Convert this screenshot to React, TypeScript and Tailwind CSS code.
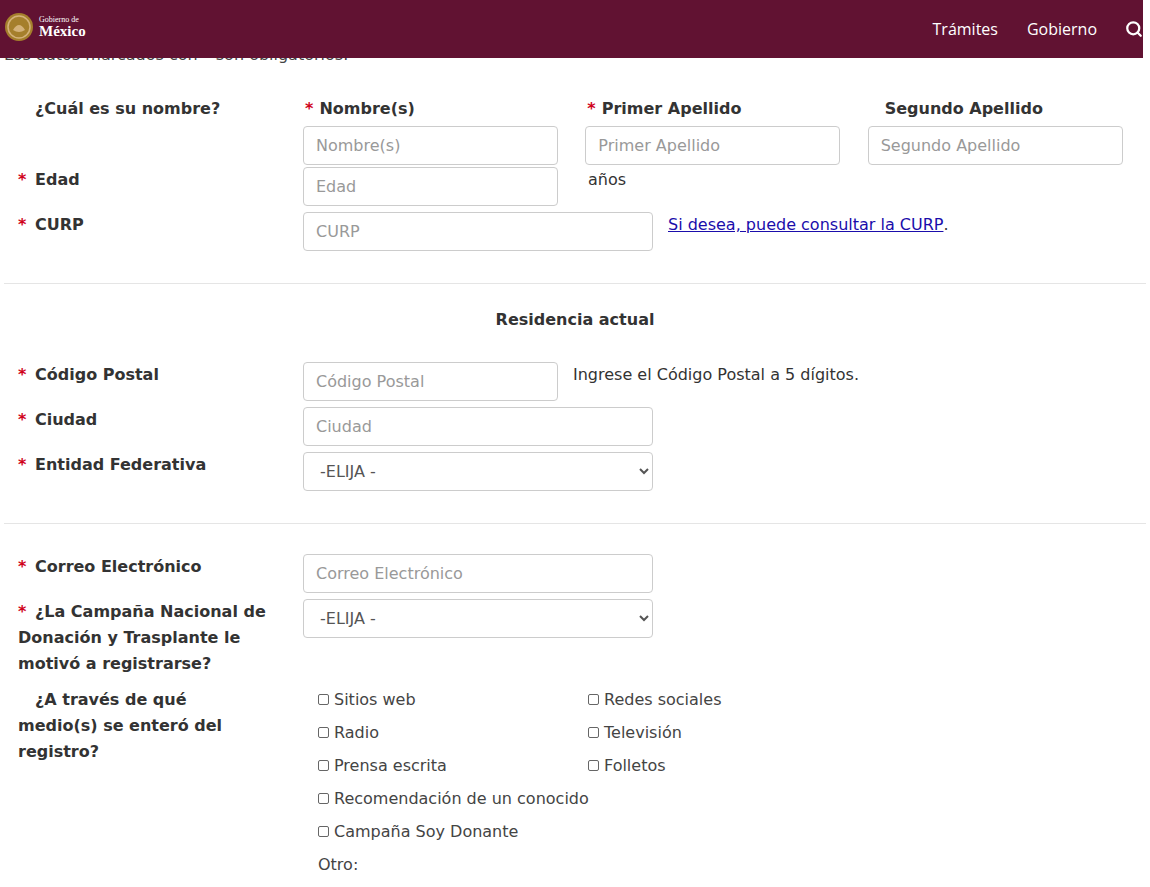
import { Search } from 'lucide-react';

const font = { fontFamily: '"DejaVu Sans", "Liberation Sans", sans-serif' };

function Req({ on = true }: { on?: boolean }) {
  return <span className="inline-block w-[17px] text-[#d0021b]">{on ? '*' : ''}</span>;
}

function Input({ ph, w = 'w-[255px]' }: { ph: string; w?: string }) {
  return (
    <input
      placeholder={ph}
      className={`${w} h-[39px] rounded-[4px] border border-[#cccccc] px-3 text-[16px] text-[#555] placeholder:text-[#999] outline-none`}
    />
  );
}

function Select({ w = 'w-[350px]' }: { w?: string }) {
  return (
    <select className={`${w} h-[39px] rounded-[4px] border border-[#cccccc] px-3 text-[16px] text-[#555] bg-white`}>
      <option>-ELIJA -</option>
    </select>
  );
}

function Row({ label, children, h = 'h-[45px]' }: { label: React.ReactNode; children: React.ReactNode; h?: string }) {
  return (
    <div className={`flex ${h}`}>
      <div className="w-[303px] shrink-0 pl-[18px] pr-[30px] pt-[0px] font-bold text-[#333]">{label}</div>
      <div className="flex items-start">{children}</div>
    </div>
  );
}

function Check({ t }: { t: string }) {
  return (
    <label className="flex items-center gap-[5px] h-[33px] text-[#444]">
      <span className="inline-block w-[11px] h-[11px] border border-[#666] rounded-[2px]" />
      {t}
    </label>
  );
}

export default function App() {
  return (
    <div className="relative bg-white min-h-[887px] text-[16px] text-[#333] overflow-hidden" style={font}>
      <header className="absolute top-0 left-0 w-[1143px] h-[58px] bg-[#611232] flex items-center justify-between pl-[4px] pr-[0px] z-10" style={{ fontFamily: '"Open Sans", sans-serif' }}>
        <div className="flex items-center gap-[5px] -mt-[4px]">
          <svg width="30" height="30" viewBox="0 0 30 30">
            <circle cx="15" cy="15" r="14" fill="#a57f2c" />
            <circle cx="15" cy="15" r="11" fill="none" stroke="#d4b27a" strokeWidth="1.5" />
            <path d="M9 18 Q15 8 21 18 Q15 22 9 18Z" fill="#d4b27a" />
          </svg>
          <div className="leading-none text-white" style={{ fontFamily: '"Liberation Serif", serif' }}>
            <div className="text-[8px]">Gobierno de</div>
            <div className="text-[15px] font-bold">México</div>
          </div>
        </div>
        <nav className="flex items-center text-white text-[16px]">
          <span className="mr-[29px]">Trámites</span>
          <span className="mr-[28px]">Gobierno</span>
          <Search size={18} strokeWidth={3} />
        </nav>
      </header>
      <div className="pt-[42px] pl-[4px] text-[#444] leading-[26px]">Los datos marcados con * son obligatorios.</div>

      <div className="pt-[28px] leading-[26px]">
        <div className="flex">
          <div className="w-[303px] shrink-0 pl-[18px] font-bold"><Req on={false} />¿Cuál es su nombre?</div>
          {['Nombre(s)', 'Primer Apellido', 'Segundo Apellido'].map((n, i) => (
            <div key={n} className="w-[285px]">
              <div className={`font-bold h-[26px] ${i === 2 ? 'pl-[17px]' : 'pl-[2px]'}`}>
                {i < 2 && <span className="text-[#d0021b] mr-[6px]">*</span>}
                {n}
              </div>
              <div className="h-[45px] pt-[4px]"><Input ph={n} /></div>
            </div>
          ))}
        </div>
        <Row label={<><Req />Edad</>}>
          <Input ph="Edad" />
          <span className="ml-[30px]">años</span>
        </Row>
        <Row label={<><Req />CURP</>}>
          <Input ph="CURP" w="w-[350px]" />
          <a className="ml-[15px] text-[#1a0dab] underline">Si desea, puede consultar la CURP</a>.
        </Row>
      </div>

      <hr className="mx-[4px] mt-[26px] border-[#e5e5e5]" />
      <div className="text-center font-bold pt-[24px] pb-[30px]">Residencia actual</div>

      <div className="leading-[26px]">
        <Row label={<><Req />Código Postal</>}>
          <Input ph="Código Postal" />
          <span className="ml-[15px]">Ingrese el Código Postal a 5 dígitos.</span>
        </Row>
        <Row label={<><Req />Ciudad</>}>
          <Input ph="Ciudad" w="w-[350px]" />
        </Row>
        <Row label={<><Req />Entidad Federativa</>}>
          <Select />
        </Row>
      </div>

      <hr className="mx-[4px] mt-[26px] border-[#e5e5e5]" />

      <div className="pt-[30px] leading-[26px]">
        <Row label={<><Req />Correo Electrónico</>}>
          <Input ph="Correo Electrónico" w="w-[350px]" />
        </Row>
        <Row h="h-[88px]" label={<><Req />¿La Campaña Nacional de Donación y Trasplante le motivó a registrarse?</>}>
          <Select />
        </Row>
        <div className="flex">
          <div className="w-[303px] shrink-0 pl-[18px] pr-[40px] font-bold"><Req on={false} />¿A través de qué medio(s) se enteró del registro?</div>
          <div className="pl-[15px] -mt-[4px]">
            <div className="grid grid-cols-[270px_200px]">
              <Check t="Sitios web" />
              <Check t="Redes sociales" />
              <Check t="Radio" />
              <Check t="Televisión" />
              <Check t="Prensa escrita" />
              <Check t="Folletos" />
            </div>
            <Check t="Recomendación de un conocido" />
            <Check t="Campaña Soy Donante" />
            <div className="h-[33px] flex items-center text-[#444]">Otro:</div>
          </div>
        </div>
      </div>
    </div>
  );
}
